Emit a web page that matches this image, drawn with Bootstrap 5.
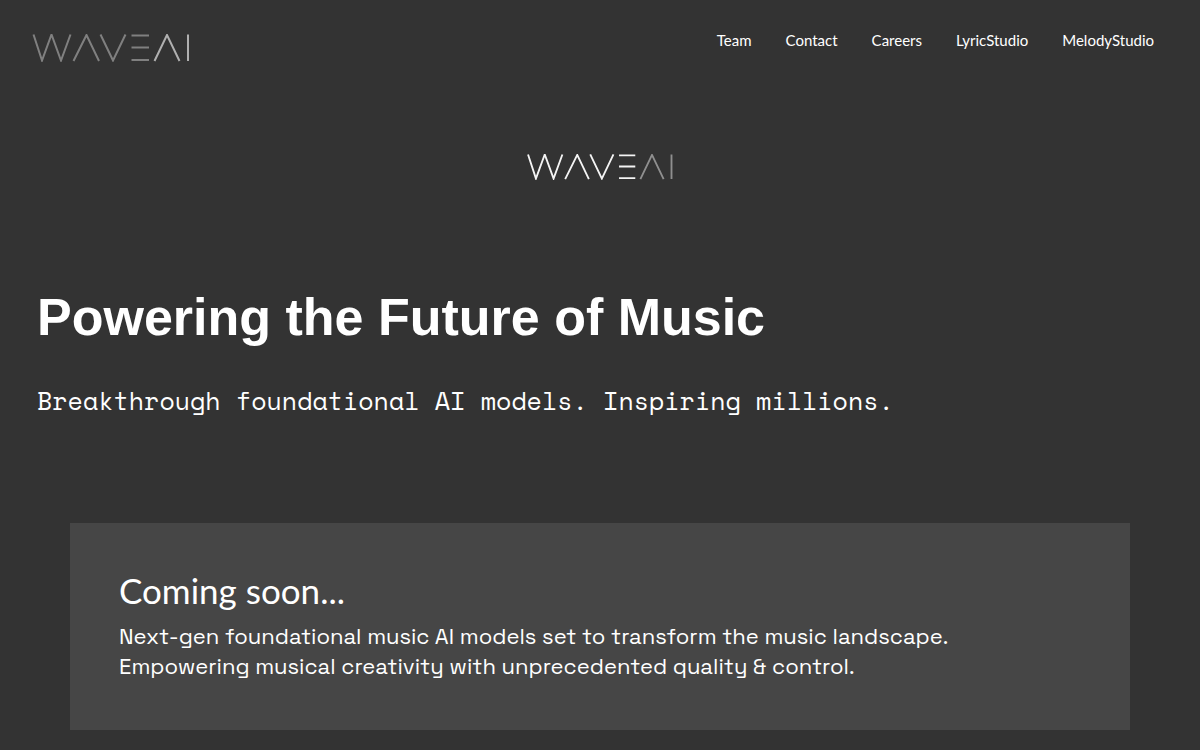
<!DOCTYPE html>
<html lang="en">
<head>
<meta charset="utf-8">
<meta name="viewport" content="width=device-width, initial-scale=1">
<title>WaveAI</title>
<link href="https://cdn.jsdelivr.net/npm/bootstrap@5.3.0/dist/css/bootstrap.min.css" rel="stylesheet">
<style>
  body { background: #333; color: #fff; font-family: Lato, sans-serif; }
  .site-header { padding: 28px 46px 33px 32px; }
  .site-header .nav { gap: 34px; }
  .site-header .nav-link { padding: 0; color: #fff; font-size: 15px; line-height: 24px; }
  .logo { display: block; fill: none; stroke-width: 2; }
  .logo-header { width: 158px; height: 28px; margin-top: 6px; }
  .logo-hero { width: 148px; height: 26px; }
  .logo-header .wave { stroke: #808080; }
  .logo-header .ai { stroke: #b0b0b0; }
  .logo-hero .wave { stroke: #f4f4f4; }
  .logo-hero .ai { stroke: #8f8f8f; }
  .hero { padding: 59px 37px 0; }
  .hero h1 { margin: 107px 0 0; font: 700 52px/60px "Liberation Sans", sans-serif; }
  .tagline { margin: 36px 0 0; font: 25px/36px "Space Mono", "Liberation Mono", monospace; }
  .teaser { margin: 104px 70px 20px; padding: 46px 49px 49px; background: #464646; }
  .teaser h2 { margin: 0 0 10px; font-size: 35px; font-weight: 400; line-height: 42px; }
  .teaser p { margin: 0; font: 22px/30px "Space Grotesk", Inter, sans-serif; }
</style>
</head>
<body>
<svg class="d-none" aria-hidden="true">
  <symbol id="logo-wave" viewBox="0 0 158 28">
    <path d="M1.5 .5 10 26.500 19.500 .5 29 26.500 38.500 .5M41.500 27 54.500 1 67 27M68.500 .5 81 26.500 93.500 .5M99.500 1.500H117M99.500 13.500H117M99.500 26H117"/>
  </symbol>
  <symbol id="logo-ai" viewBox="0 0 158 28">
    <path d="M122.500 27 135 1 147.500 27M156 .5V27"/>
  </symbol>
</svg>

<header class="site-header d-flex flex-wrap justify-content-between align-items-start">
  <a href="#" aria-label="WaveAI">
    <svg class="logo logo-header" aria-hidden="true"><use class="wave" href="#logo-wave"/><use class="ai" href="#logo-ai"/></svg>
  </a>
  <nav class="nav">
    <a class="nav-link" href="#team">Team</a>
    <a class="nav-link" href="#contact">Contact</a>
    <a class="nav-link" href="#careers">Careers</a>
    <a class="nav-link" href="#lyricstudio">LyricStudio</a>
    <a class="nav-link" href="#melodystudio">MelodyStudio</a>
  </nav>
</header>

<main>
  <section class="hero">
    <svg class="logo logo-hero mx-auto" role="img" aria-label="WaveAI"><use class="wave" href="#logo-wave"/><use class="ai" href="#logo-ai"/></svg>
    <h1>Powering the Future of Music</h1>
    <p class="tagline">Breakthrough foundational AI models. Inspiring millions.</p>
  </section>
  <section class="teaser">
    <h2>Coming soon...</h2>
    <p>Next-gen foundational music AI models set to transform the music landscape.<br>Empowering musical creativity with unprecedented quality &amp; control.</p>
  </section>
</main>
<script src="https://cdn.jsdelivr.net/npm/bootstrap@5.3.0/dist/js/bootstrap.bundle.min.js"></script>
</body>
</html>
